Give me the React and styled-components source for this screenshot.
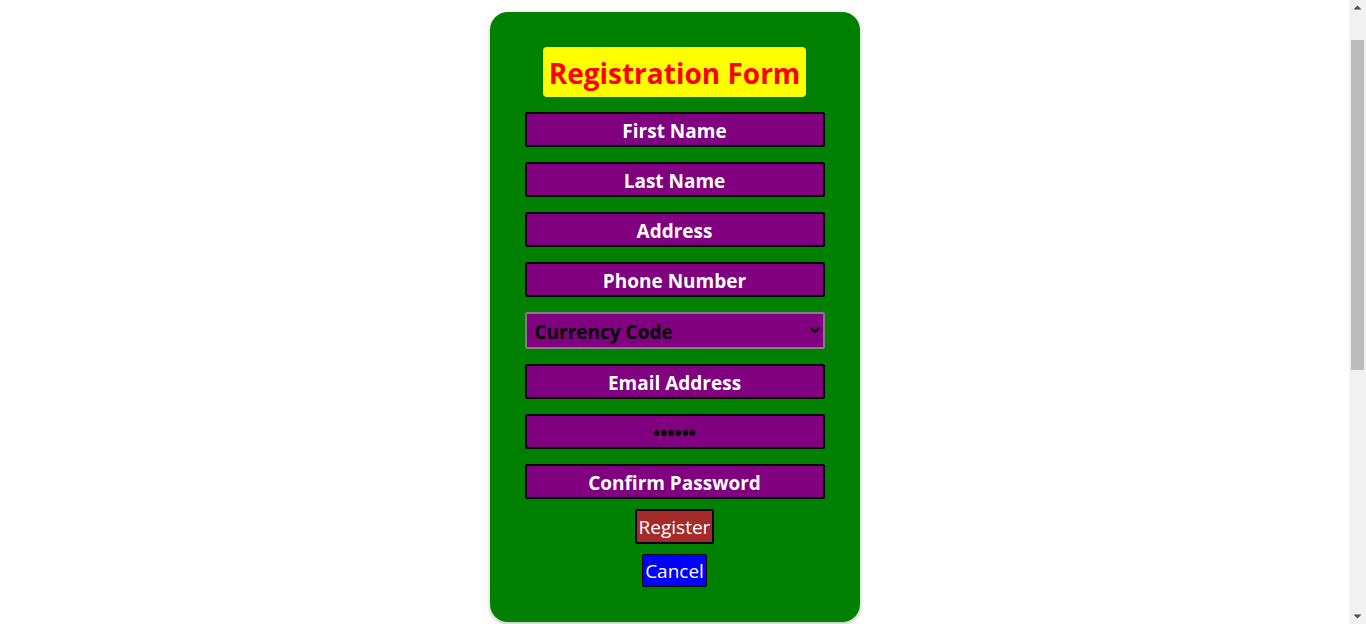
import React from 'react'
import styled, { createGlobalStyle } from 'styled-components'

const Global = createGlobalStyle`
  body {
    margin: 0;
    background: #fff;
    font-family: "Open Sans", "Noto Sans", sans-serif;
  }
`

const Page = styled.div`
  padding: 12px 17px 2px 0;
  display: flex;
  justify-content: center;
  align-items: flex-start;
`

const Card = styled.form`
  width: 370px;
  box-sizing: border-box;
  background: #008000;
  border-radius: 18px;
  box-shadow: 0 2px 4px rgba(0, 0, 0, 0.25);
  padding: 35px 0 35px;
  display: flex;
  flex-direction: column;
  align-items: center;
`

const Title = styled.h1`
  margin: 0 0 15px;
  width: 263px;
  height: 50px;
  padding-top: 2px;
  box-sizing: border-box;
  background: #ffff00;
  color: #ff0000;
  border-radius: 4px;
  font-size: 28px;
  font-weight: 700;
  display: flex;
  align-items: center;
  justify-content: center;
  white-space: nowrap;
`

const Field = styled.input`
  width: 300px;
  height: 35px;
  box-sizing: border-box;
  margin-bottom: 15px;
  padding: 2px 0 0;
  background: #800080;
  border: 2px solid #000;
  border-radius: 2px;
  color: #000;
  font-family: inherit;
  font-size: 19px;
  font-weight: 700;
  text-align: center;
  outline: none;

  &::placeholder {
    color: #fff;
    opacity: 1;
  }
`

const Select = styled.select`
  width: 300px;
  height: 37px;
  box-sizing: border-box;
  margin-bottom: 15px;
  padding: 2px 0 0 4px;
  background: #800080;
  border: 2px solid #808080;
  border-radius: 2px;
  color: #000;
  font-family: inherit;
  font-size: 19px;
  font-weight: 700;
  outline: none;
`

const Button = styled.button`
  height: ${p => p.$h}px;
  padding: 1px 2px 0;
  margin-top: ${p => p.$mt}px;
  background: ${p => p.$bg};
  color: #fff;
  border: ${p => p.$bw}px solid #000;
  border-radius: 2px;
  font-family: inherit;
  font-size: 19px;
  cursor: pointer;
`

/* window scrollbar as it shows in the picture */
const Rail = styled.aside`
  position: fixed;
  top: 0;
  right: 0;
  bottom: 0;
  width: 17px;
  background: #f1f1f1;
  display: flex;
  flex-direction: column;
  align-items: center;
`

const Arrow = styled.svg`
  flex: none;
  display: block;
`

const Track = styled.div`
  flex: 1;
  align-self: stretch;
  padding: 23px 2px 0;
`

const Thumb = styled.div`
  height: 330px;
  background: #bcbcbc;
`

export default function App() {
  return (
    <>
      <Global />
      <Page>
        <Card onSubmit={e => e.preventDefault()}>
          <Title>Registration Form</Title>
          <Field placeholder="First Name" />
          <Field placeholder="Last Name" />
          <Field placeholder="Address" />
          <Field placeholder="Phone Number" />
          <Select defaultValue="">
            <option value="">Currency Code</option>
            <option value="USD">USD</option>
            <option value="EUR">EUR</option>
          </Select>
          <Field placeholder="Email Address" />
          <Field type="password" defaultValue="123456" placeholder="Password" />
          <Field type="password" placeholder="Confirm Password" />
          <Button type="submit" $bg="#a52a2a" $h={35} $bw={2} $mt={-5}>Register</Button>
          <Button type="button" $bg="#0000ff" $h={33} $bw={1} $mt={10}>Cancel</Button>
        </Card>
      </Page>
      <Rail>
        <Arrow width="17" height="17" viewBox="0 0 17 17">
          <path d="M4.5 9.5h8L8.5 5.5z" fill="#505050" />
        </Arrow>
        <Track>
          <Thumb />
        </Track>
        <Arrow width="17" height="17" viewBox="0 0 17 17">
          <path d="M4.5 7.5h8L8.5 11.5z" fill="#505050" />
        </Arrow>
      </Rail>
    </>
  )
}
